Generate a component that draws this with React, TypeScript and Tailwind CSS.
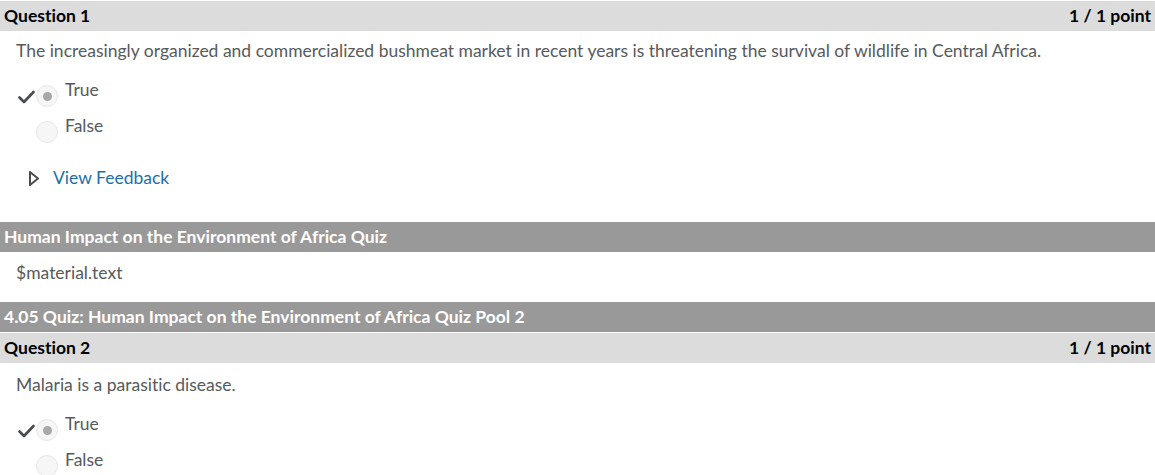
const font = { fontFamily: "Lato, 'Noto Sans', sans-serif" };

function Radio({ checked }: { checked?: boolean }) {
  return (
    <span className="flex h-[22px] w-[22px] items-center justify-center rounded-full border border-[#e8e8e8] bg-[#f6f6f6]">
      {checked && <span className="h-[9px] w-[9px] rounded-full bg-[#a8a8a8]" />}
    </span>
  );
}

function Check() {
  return (
    <svg width="17" height="14" viewBox="0 0 17 14" className="block">
      <path d="M1.5 7.5 L6 12 L15.5 2" fill="none" stroke="#494c4e" strokeWidth="2.6" strokeLinecap="round" strokeLinejoin="round" />
    </svg>
  );
}

function Option({ label, correct }: { label: string; correct?: boolean }) {
  return (
    <div className="flex h-[36px] items-start">
      <div className="flex w-[36px] justify-end pr-[1px] pt-[10px]">{correct && <Check />}</div>
      <div className="pt-[5px]">
        <Radio checked={correct} />
      </div>
      <span className="ml-[7px] text-[17.5px] leading-[20px] text-[#565a5c]">{label}</span>
    </div>
  );
}

function QuestionHeader({ n }: { n: number }) {
  return (
    <div className="flex h-[30px] items-center justify-between bg-[#dcdcdc] px-[4px] text-[17.5px] font-bold text-black">
      <span>Question {n}</span>
      <span>1 / 1 point</span>
    </div>
  );
}

function SectionBar({ title }: { title: string }) {
  return (
    <div className="flex h-[30px] items-center bg-[#999999] px-[4px] text-[17.5px] font-bold text-white">{title}</div>
  );
}

export default function App() {
  return (
    <div className="h-[475px] w-[1155px] overflow-hidden bg-white pt-[1px] [font-feature-settings:'liga'_0]" style={font}>
      <QuestionHeader n={1} />
      <p className="pl-[16px] pt-[10px] text-[17.5px] leading-[20px] text-[#565a5c]">
        The increasingly organized and commercialized bushmeat market in recent years is threatening the survival of wildlife in Central Africa.
      </p>
      <div className="mt-[19px]">
        <Option label="True" correct />
        <Option label="False" />
      </div>
      <div className="mt-[13px] flex h-[26px] items-center">
        <svg width="12" height="17" viewBox="0 0 12 17" className="ml-[28px]">
          <path d="M2 2 L10 8.5 L2 15 Z" fill="none" stroke="#494c4e" strokeWidth="2" strokeLinejoin="round" />
        </svg>
        <span className="ml-[13px] text-[17.5px] text-[#1b6fa8]">View Feedback</span>
      </div>
      <div className="mt-[31px]">
        <SectionBar title="Human Impact on the Environment of Africa Quiz" />
      </div>
      <p className="pl-[16px] pt-[11px] text-[17.5px] leading-[20px] text-[#565a5c]">$material.text</p>
      <div className="mt-[19px]">
        <SectionBar title="4.05 Quiz: Human Impact on the Environment of Africa Quiz Pool 2" />
      </div>
      <div className="mt-[1px]">
        <QuestionHeader n={2} />
      </div>
      <p className="pl-[16px] pt-[12px] text-[17.5px] leading-[20px] text-[#565a5c]">Malaria is a parasitic disease.</p>
      <div className="mt-[19px]">
        <Option label="True" correct />
        <Option label="False" />
      </div>
    </div>
  );
}
